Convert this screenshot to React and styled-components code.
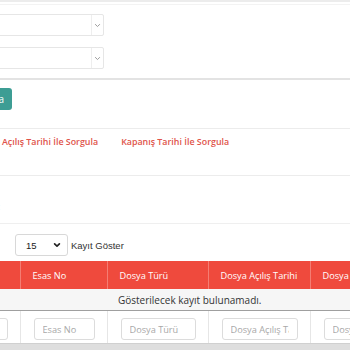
import React from "react";
import styled, { createGlobalStyle } from "styled-components";

const GlobalStyle = createGlobalStyle`
  html, body {
    margin: 0;
    padding: 0;
    background: #fff;
    overflow: hidden;
  }
  body {
    font-family: "Open Sans", "Liberation Sans", Arial, sans-serif;
  }
`;

const Viewport = styled.div`
  width: 350px;
  height: 350px;
  overflow: hidden;
  position: relative;
  background: #fff;
`;

/* page is scrolled a bit to the right, so everything starts left of the view */
const Content = styled.div`
  margin-left: -30px;
  width: 420px;
`;

const TopStrip = styled.div`
  height: 2px;
  background: #ececec;
  margin-bottom: 2px;
`;

const FilterPanel = styled.div`
  border-top: 1px solid #f3f3f3;
  border-bottom: 2px solid #e3e3e3;
  padding: 9px 0 9px 10px;
  display: flex;
  flex-direction: column;
  gap: 11px;
`;

const SelectBox = styled.div`
  width: ${(p) => p.$width}px;
  height: 22px;
  box-sizing: border-box;
  border: 1px solid #e6e6e6;
  border-radius: 2px;
  display: flex;
  justify-content: flex-end;
  background: #fff;
`;

const SelectArrow = styled.div`
  width: 11px;
  border-left: 1px solid #eeeeee;
  display: flex;
  align-items: center;
  justify-content: center;
`;

const SearchButton = styled.button`
  margin: 8px 0 0 10px;
  width: 32px;
  height: 22px;
  border: none;
  border-radius: 3px;
  background: #3d9d94;
  color: #fff;
  font-family: inherit;
  font-size: 10px;
  padding: 0;
  display: block;
`;

const TabBar = styled.div`
  margin-top: 18px;
  border-top: 1px solid #ececec;
  border-bottom: 1px solid #ececec;
  height: 46px;
  display: flex;
  gap: 23px;
  padding-left: 32px;
  align-items: flex-start;
`;

const Tab = styled.span`
  margin-top: 6px;
  font-size: 8.9px;
  font-weight: 600;
  color: #e0544a;
  white-space: nowrap;
`;

const StrayLabel = styled.div`
  margin: 24px 0 0 28px;
  font-size: 9px;
  color: #bbb;
  height: 10px;
`;

const TableArea = styled.div`
  margin-top: 13px;
  border-top: 1px solid #efefef;
  padding-top: 10px;
`;

const LengthRow = styled.div`
  display: flex;
  align-items: center;
  gap: 3px;
  padding-left: 45px;
  font-family: "Liberation Sans", Arial, sans-serif;
  font-size: 9.5px;
  color: #333;
`;

const LengthSelect = styled.div`
  width: 53px;
  height: 22px;
  box-sizing: border-box;
  border: 1px solid #d8d8d8;
  border-radius: 3px;
  display: flex;
  align-items: center;
  justify-content: space-between;
  padding: 0 6px 0 10px;
  font-size: 9.5px;
  color: #222;
`;

const Table = styled.table`
  margin-top: 5px;
  border-collapse: collapse;
  table-layout: fixed;
  width: 420px;
  font-size: 9.2px;
`;

const HeadCell = styled.th`
  height: 28px;
  padding: 0 0 0 12px;
  background: #ef4a3d;
  color: #fff;
  font-weight: 400;
  text-align: left;
  white-space: nowrap;
  overflow: hidden;
  border-left: 1px solid #f47d73;
  &:first-child {
    border-left: none;
  }
`;

const EmptyCell = styled.td`
  height: 21px;
  padding: 0 0 0 148px;
  background: #f6f6f6;
  color: #333;
  text-align: left;
  font-size: 10px;
  border-bottom: 1px solid #9f9f9f;
  white-space: nowrap;
`;

const FootCell = styled.td`
  height: 32px;
  padding: 7px 12px 3px 13px;
  box-sizing: border-box;
  border-left: 1px solid #e6e6e6;
  vertical-align: top;
  &:first-child {
    border-left: none;
    padding-left: 0;
  }
`;

const FilterInput = styled.input`
  width: 100%;
  height: 22px;
  box-sizing: border-box;
  border: 1px solid #dcdcdc;
  border-radius: 3px;
  padding: 0 8px;
  font-family: inherit;
  font-size: 9.2px;
  color: #333;
  &::placeholder {
    color: #a8a8a8;
  }
`;

const ScrollTrack = styled.div`
  height: 7px;
  background: #dedede;
  border-top: 1px solid #d0d0d0;
`;

const Chevron = ({ color, size = 7, weight = 1 }) => (
  <svg width={size} height={size} viewBox="0 0 10 10">
    <path
      d="M2 3.5 L5 6.5 L8 3.5"
      fill="none"
      stroke={color}
      strokeWidth={weight * 1.4}
      strokeLinecap="round"
      strokeLinejoin="round"
    />
  </svg>
);

const columns = [
  { title: "", width: 50 },
  { title: "Esas No", width: 87 },
  { title: "Dosya Türü", width: 101 },
  { title: "Dosya Açılış Tarihi", width: 102 },
  { title: "Dosya Kapanış Tarihi", width: 80 },
];

const placeholders = ["", "Esas No", "Dosya Türü", "Dosya Açılış Tarihi", "Dosya Kapanış Tarihi"];

export default function App() {
  return (
    <>
      <GlobalStyle />
      <Viewport>
        <Content>
          <TopStrip />
          <FilterPanel>
            <SelectBox $width={124}>
              <SelectArrow>
                <Chevron color="#999" />
              </SelectArrow>
            </SelectBox>
            <SelectBox $width={124}>
              <SelectArrow>
                <Chevron color="#999" />
              </SelectArrow>
            </SelectBox>
          </FilterPanel>
          <SearchButton>Ara</SearchButton>
          <TabBar>
            <Tab>Açılış Tarihi İle Sorgula</Tab>
            <Tab>Kapanış Tarihi İle Sorgula</Tab>
          </TabBar>
          <StrayLabel>:</StrayLabel>
          <TableArea>
            <LengthRow>
              <LengthSelect>
                15
                <Chevron color="#222" size={8} weight={1.5} />
              </LengthSelect>
              Kayıt Göster
            </LengthRow>
            <Table>
              <colgroup>
                {columns.map((c, i) => (
                  <col key={i} style={{ width: c.width }} />
                ))}
              </colgroup>
              <thead>
                <tr>
                  {columns.map((c, i) => (
                    <HeadCell key={i}>{c.title}</HeadCell>
                  ))}
                </tr>
              </thead>
              <tbody>
                <tr>
                  <EmptyCell colSpan={5}>Gösterilecek kayıt bulunamadı.</EmptyCell>
                </tr>
              </tbody>
              <tfoot>
                <tr>
                  {placeholders.map((p, i) => (
                    <FootCell key={i}>
                      <FilterInput placeholder={p} />
                    </FootCell>
                  ))}
                </tr>
              </tfoot>
            </Table>
          </TableArea>
          <ScrollTrack />
        </Content>
      </Viewport>
    </>
  );
}
